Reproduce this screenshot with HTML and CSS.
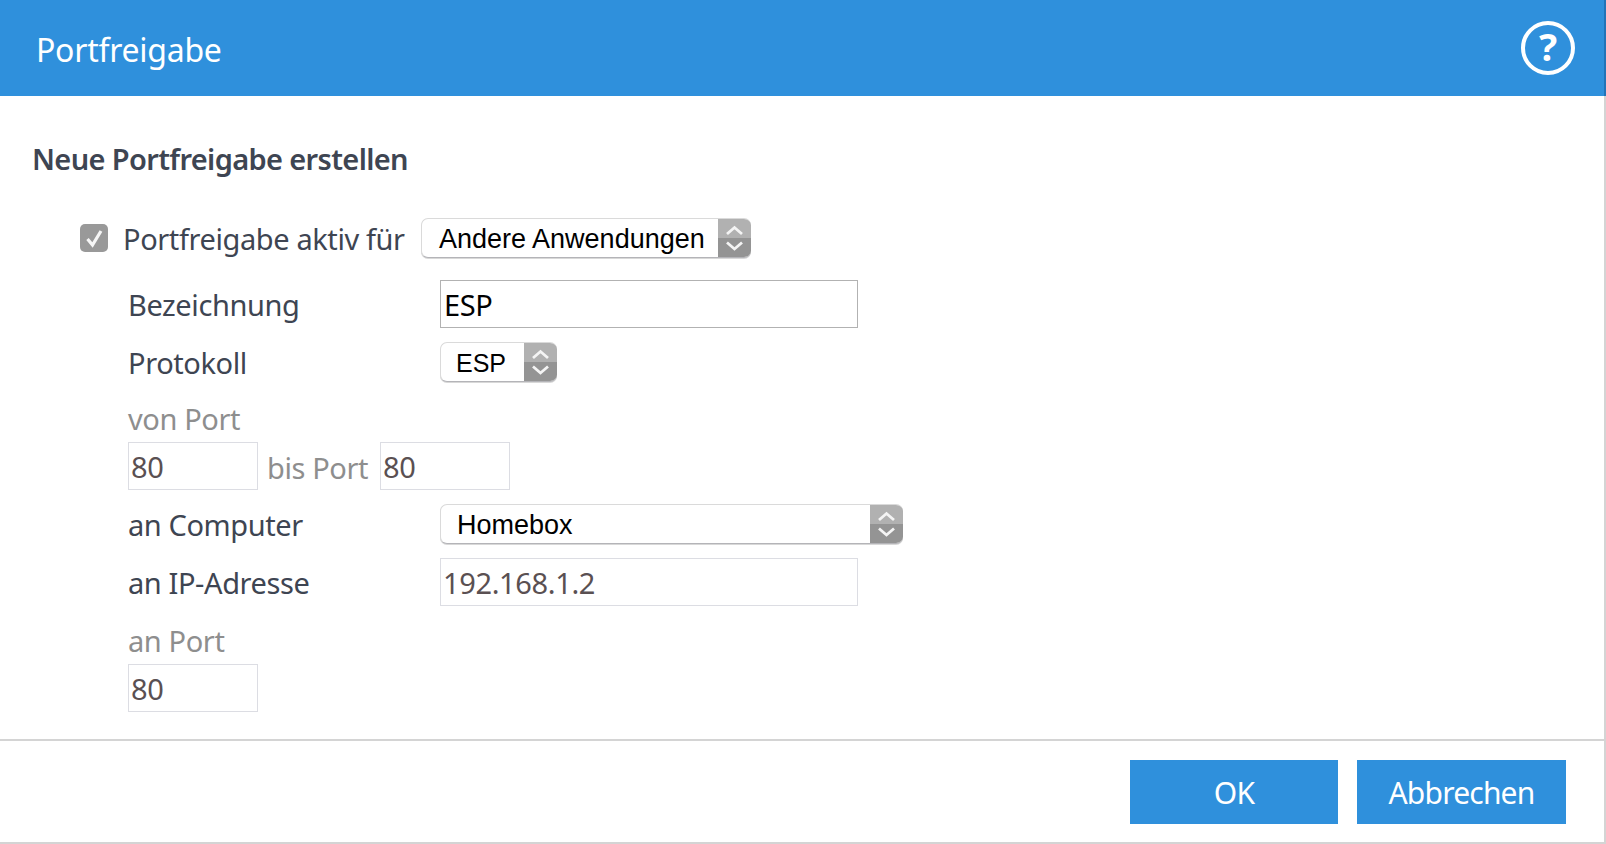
FILE: index.html
```html
<!DOCTYPE html>
<html lang="de">
<head>
<meta charset="utf-8">
<title>Portfreigabe</title>
<link rel="stylesheet" href="styles.css">
</head>
<body>
<div class="page">
  <header class="header">
    <h1 class="title">Portfreigabe</h1>
    <div class="help">?</div>
  </header>
  <main class="content">
    <h2 class="heading">Neue Portfreigabe erstellen</h2>
    <div class="active-row">
      <span class="checkbox"><svg width="28" height="28" viewBox="0 0 28 28"><path d="M7.5 15l5 6L21 7" fill="none" stroke="#f6f6f6" stroke-width="3.2"/></svg></span>
      <span class="label active-label">Portfreigabe aktiv für</span>
      <div class="select select-app"><span class="select-text">Andere Anwendungen</span><span class="stepper"><svg width="33" height="40" viewBox="0 0 33 40"><path d="M9 16l7.5-6.5 7.5 6.5M9 24.5l7.5 6.5 7.5-6.5" fill="none" stroke="#f4f4f4" stroke-width="2.8"/></svg></span></div>
    </div>
    <div class="form">
      <div class="row row-name">
        <span class="label">Bezeichnung</span>
        <input class="field field-wide field-active" value="ESP">
      </div>
      <div class="row">
        <span class="label">Protokoll</span>
        <div class="select select-proto"><span class="select-text">ESP</span><span class="stepper"><svg width="33" height="40" viewBox="0 0 33 40"><path d="M9 16l7.5-6.5 7.5 6.5M9 24.5l7.5 6.5 7.5-6.5" fill="none" stroke="#f4f4f4" stroke-width="2.8"/></svg></span></div>
      </div>
      <div class="stack">
        <span class="label muted">von Port</span>
        <div class="ports">
          <input class="field field-port" value="80">
          <span class="label muted port-between">bis Port</span>
          <input class="field field-port" value="80">
        </div>
      </div>
      <div class="row">
        <span class="label">an Computer</span>
        <div class="select select-host"><span class="select-text">Homebox</span><span class="stepper"><svg width="33" height="40" viewBox="0 0 33 40"><path d="M9 16l7.5-6.5 7.5 6.5M9 24.5l7.5 6.5 7.5-6.5" fill="none" stroke="#f4f4f4" stroke-width="2.8"/></svg></span></div>
      </div>
      <div class="row">
        <span class="label">an IP-Adresse</span>
        <input class="field field-wide" value="192.168.1.2">
      </div>
      <div class="stack stack-last">
        <span class="label muted">an Port</span>
        <div class="ports">
          <input class="field field-port" value="80">
        </div>
      </div>
    </div>
  </main>
  <footer class="footer">
    <button class="btn btn-ok">OK</button>
    <button class="btn btn-cancel">Abbrechen</button>
  </footer>
</div>
</body>
</html>
```
FILE: styles.css
```css
* { box-sizing: border-box; }
html, body { margin: 0; padding: 0; background: #fff; }
body { font-family: "Noto Sans", "Open Sans", sans-serif; color: #3e4552; }
.page { width: 1606px; height: 844px; display: flex; flex-direction: column; overflow: hidden; }
.header {
  height: 96px; flex: none; background: #2f90dc; border-right: 2px solid #2273b8;
  display: flex; align-items: center; justify-content: space-between;
  padding: 0 29px 0 36px;
}
.title { margin: 0; padding-top: 4px; font-size: 32px; font-weight: 400; color: #fff; letter-spacing: -0.26px; line-height: 40px; }
.help {
  width: 54px; height: 54px; border: 4px solid #fff; border-radius: 50%;
  color: #fff; font-size: 38px; font-weight: 700; line-height: 43px; text-align: center;
}
.content { flex: 1; border-right: 2px solid #d4d4d4; padding: 43px 0 0; }
.heading { margin: 0 0 39px 32px; font-size: 29px; font-weight: 600; line-height: 40px; letter-spacing: -0.64px; color: #3e4552; }
.label { font-size: 29px; height: 40px; line-height: 40px; letter-spacing: -0.4px; white-space: nowrap; padding-top: 1px; }
.muted { color: #8e8e8e; }
.active-row { display: flex; align-items: center; padding-left: 80px; height: 40px; }
.checkbox { width: 28px; height: 28px; border-radius: 5px; background: #999; flex: none; display: block; }
.checkbox svg { display: block; }
.active-label { margin-left: 15px; width: 298px; }
.form { padding-left: 128px; }
.row { display: grid; grid-template-columns: 312px auto; align-items: center; justify-content: start; margin-top: 14px; }
.row-name { margin-top: 22px; }
.stack { margin-top: 14px; display: flex; flex-direction: column; }
.stack-last { margin-top: 12px; }
.stack > .label { height: 46px; line-height: 46px; padding-top: 0; }
.ports { display: flex; align-items: center; gap: 9px; }
.port-between { margin-right: 3px; padding-top: 2px; }
.field {
  height: 48px; border: 1px solid #dcdde3; background: #fff; padding: 0 2px; margin: 0;
  font-family: "Noto Sans", sans-serif; font-size: 29px; letter-spacing: -0.36px; color: #5a5052; outline: none; border-radius: 0;
}
.field-active { border-color: #b2b2b2; color: #000; padding: 0 3px; }
.field-wide { width: 418px; }
.field-port { width: 130px; }
.select {
  height: 40px; display: flex; align-items: stretch; background: #fff;
  border: 1px solid #dadada; border-bottom-color: #b4b4b8; border-right: 0; border-radius: 7px; overflow: hidden;
  box-shadow: 0 1px 0 #d8d8d8;
}
.select-text { flex: 1; font-family: "Liberation Sans", Arial, sans-serif; font-size: 27px; line-height: 40px; color: #000; padding-left: 16px; white-space: nowrap; }
.stepper { width: 33px; flex: none; margin: -1px 0; background: linear-gradient(#b1b1b1 0, #b1b1b1 51%, #949494 51%, #949494 100%); }
.stepper svg { display: block; }
.select-app { width: 330px; }
.select-app .select-text { padding-left: 17px; }
.select-proto { width: 117px; }
.select-proto .select-text { font-size: 25px; padding-left: 15px; }
.select-host { width: 463px; }
.footer {
  height: 105px; flex: none; border-top: 2px solid #d4d4d4; border-bottom: 2px solid #d4d4d4; border-right: 2px solid #d4d4d4;
  display: flex; justify-content: flex-end; gap: 19px; padding: 19px 38px 0 0;
}
.btn {
  height: 64px; border: 0; background: #2f90dc; color: #fff; padding: 0; border-radius: 0;
  font-family: "Noto Sans", sans-serif; font-size: 30px; letter-spacing: -0.8px;
}
.btn-ok { width: 208px; }
.btn-cancel { width: 209px; }
```
